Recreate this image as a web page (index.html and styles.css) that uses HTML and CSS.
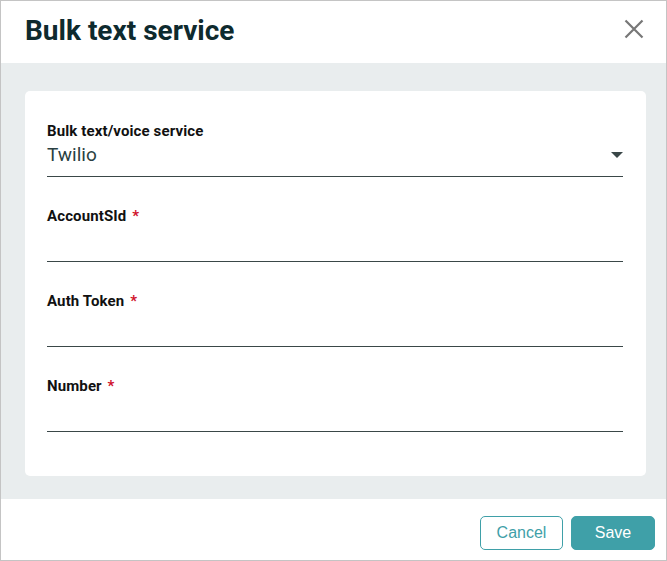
FILE: index.html
```html
<!DOCTYPE html>
<html>
<head>
<meta charset="utf-8">
<link rel="stylesheet" href="styles.css">
</head>
<body>
<div class="dialog">
  <header class="dlg-head">
    <h1 class="dlg-title">Bulk text service</h1>
    <button class="close" aria-label="Close">
      <svg width="20" height="20" viewBox="0 0 20 20"><path d="M1.5 1.5 L18.5 18.5 M18.5 1.5 L1.5 18.5" stroke="#777" stroke-width="2.2" fill="none"/></svg>
    </button>
  </header>
  <main class="dlg-body">
    <div class="card">
      <div class="field">
        <label class="label">Bulk text/voice service</label>
        <div class="control select">
          <span class="value">Twilio</span>
          <svg class="caret" width="12" height="6" viewBox="0 0 12 6"><path d="M0 0 H12 L6 6 Z" fill="#3a4748"/></svg>
        </div>
      </div>
      <div class="field">
        <label class="label">AccountSId <span class="req">*</span></label>
        <div class="control"></div>
      </div>
      <div class="field">
        <label class="label">Auth Token <span class="req">*</span></label>
        <div class="control"></div>
      </div>
      <div class="field">
        <label class="label">Number <span class="req">*</span></label>
        <div class="control"></div>
      </div>
    </div>
  </main>
  <footer class="dlg-foot">
    <button class="btn btn-outline">Cancel</button>
    <button class="btn btn-fill">Save</button>
  </footer>
</div>
</body>
</html>
```
FILE: styles.css
```css
* { box-sizing: border-box; }
html, body { margin: 0; padding: 0; background: #fff; }
body { font-family: Roboto, "Liberation Sans", sans-serif; }
.dialog {
  width: 667px;
  height: 561px;
  border: 1px solid #c4c4c4;
  display: flex;
  flex-direction: column;
  background: #fff;
}
.dlg-head {
  height: 62px;
  flex: none;
  display: flex;
  align-items: center;
  justify-content: space-between;
  padding: 0 22px 0 24px;
}
.dlg-title {
  margin: 0 0 4px 0;
  font-size: 28px;
  line-height: 33px;
  font-weight: 700;
  color: #0e2a2e;
}
.close {
  border: 0;
  background: none;
  padding: 0;
  width: 20px;
  height: 20px;
  margin-bottom: 7px;
  display: flex;
  align-items: center;
  justify-content: center;
  cursor: pointer;
}
.dlg-body {
  height: 436px;
  flex: none;
  background: #e9edee;
  padding: 28px 20px 23px 24px;
}
.card {
  background: #fff;
  border-radius: 5px;
  height: 385px;
  padding: 31px 23px 0 22px;
}
.field {
  height: 85px;
  display: flex;
  flex-direction: column;
}
.label {
  font-size: 15px;
  font-weight: 700;
  letter-spacing: 0.12px;
  color: #111;
  line-height: 18px;
}
.req { color: #d0112b; margin-left: 2px; }
.control {
  height: 37px;
  border-bottom: 1px solid #3a4748;
}
.select {
  display: flex;
  align-items: center;
  justify-content: space-between;
  padding-bottom: 8px;
}
.value {
  font-size: 19px;
  line-height: 23px;
  color: #2a3f42;
}
.caret { margin-top: 1px; }
.dlg-foot {
  height: 61px;
  flex: none;
  display: flex;
  justify-content: flex-end;
  align-items: flex-start;
  gap: 8px;
  padding: 17px 11px 0 0;
}
.btn {
  height: 34px;
  border-radius: 5px;
  font-family: "Liberation Sans", Arial, sans-serif;
  font-size: 16px;
  padding: 0;
  cursor: pointer;
}
.btn-outline {
  width: 83px;
  background: #fff;
  color: #3fa0a8;
  border: 1px solid #3fa0a8;
}
.btn-fill {
  width: 84px;
  background: #3fa0a8;
  color: #fff;
  border: 1px solid #3fa0a8;
}
```
